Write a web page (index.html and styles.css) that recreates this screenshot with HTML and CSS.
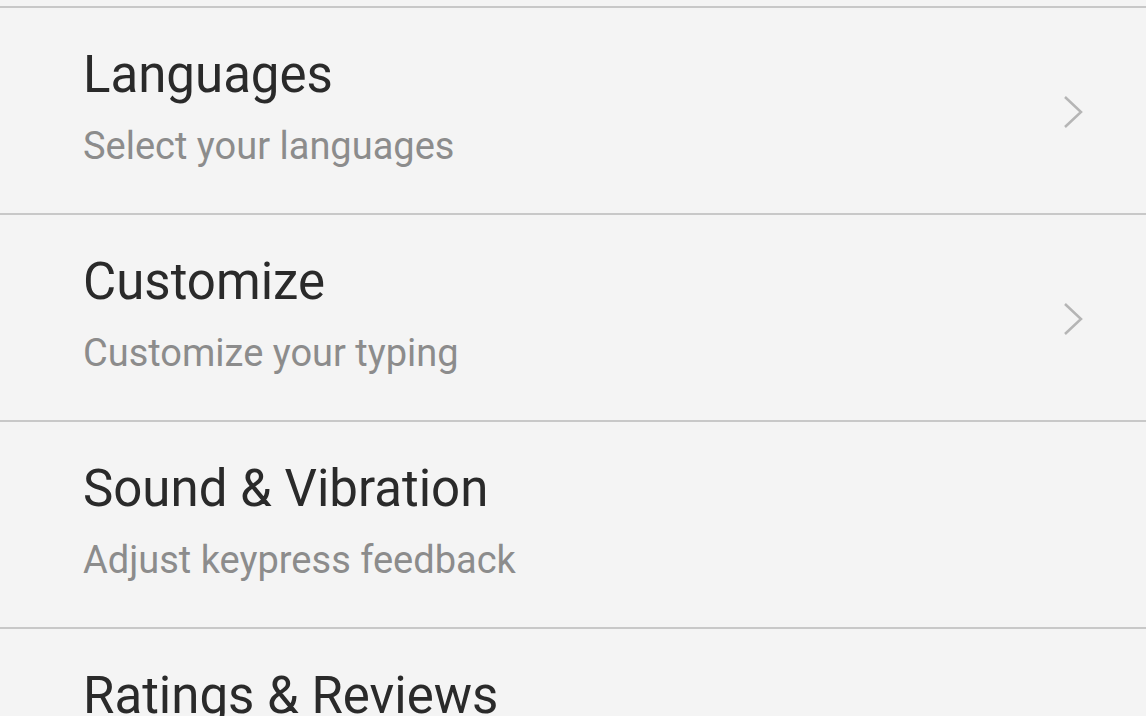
FILE: index.html
```html
<!DOCTYPE html>
<html lang="en">
  <head>
    <meta charset="UTF-8" />
    <meta name="viewport" content="width=device-width, initial-scale=1.0" />
    <title>Keyboard Settings</title>
    <link rel="stylesheet" href="styles.css">
  </head>
  <body>
    <ul class="settings-list">
      <li class="settings-item">
        <div class="item-text">
          <h2>Languages</h2>
          <p>Select your languages</p>
        </div>
        <svg class="chevron" width="20" height="34" viewBox="0 0 20 34">
          <polyline points="2,2 18,17 2,32" />
        </svg>
      </li>
      <li class="settings-item">
        <div class="item-text">
          <h2>Customize</h2>
          <p>Customize your typing</p>
        </div>
        <svg class="chevron" width="20" height="34" viewBox="0 0 20 34">
          <polyline points="2,2 18,17 2,32" />
        </svg>
      </li>
      <li class="settings-item">
        <div class="item-text">
          <h2>Sound &amp; Vibration</h2>
          <p>Adjust keypress feedback</p>
        </div>
      </li>
      <li class="settings-item">
        <div class="item-text">
          <h2>Ratings &amp; Reviews</h2>
        </div>
      </li>
    </ul>
  </body>
</html>
```

FILE: styles.css
```css
* {
  box-sizing: border-box;
  margin: 0;
  padding: 0;
}

body {
  font-family: Roboto, "Liberation Sans", Arial, sans-serif;
  background-color: #f4f4f4;
  height: 100vh;
  overflow: hidden;
}

.settings-list {
  list-style: none;
  padding-top: 6px;
}

.settings-item {
  display: flex;
  align-items: flex-start;
  justify-content: space-between;
  height: 207px;
  padding: 37px 63px 0 83px;
  border-top: 2px solid #c8c8c8;
}

.item-text h2 {
  font-size: 51px;
  font-weight: 400;
  line-height: 60px;
  color: #2a2a2a;
}

.item-text p {
  margin-top: 19px;
  font-size: 38px;
  line-height: 44px;
  color: #8c8c8c;
}

.chevron {
  margin-top: 50px;
}

.chevron polyline {
  fill: none;
  stroke: #b5b5b5;
  stroke-width: 2.5;
}
```
